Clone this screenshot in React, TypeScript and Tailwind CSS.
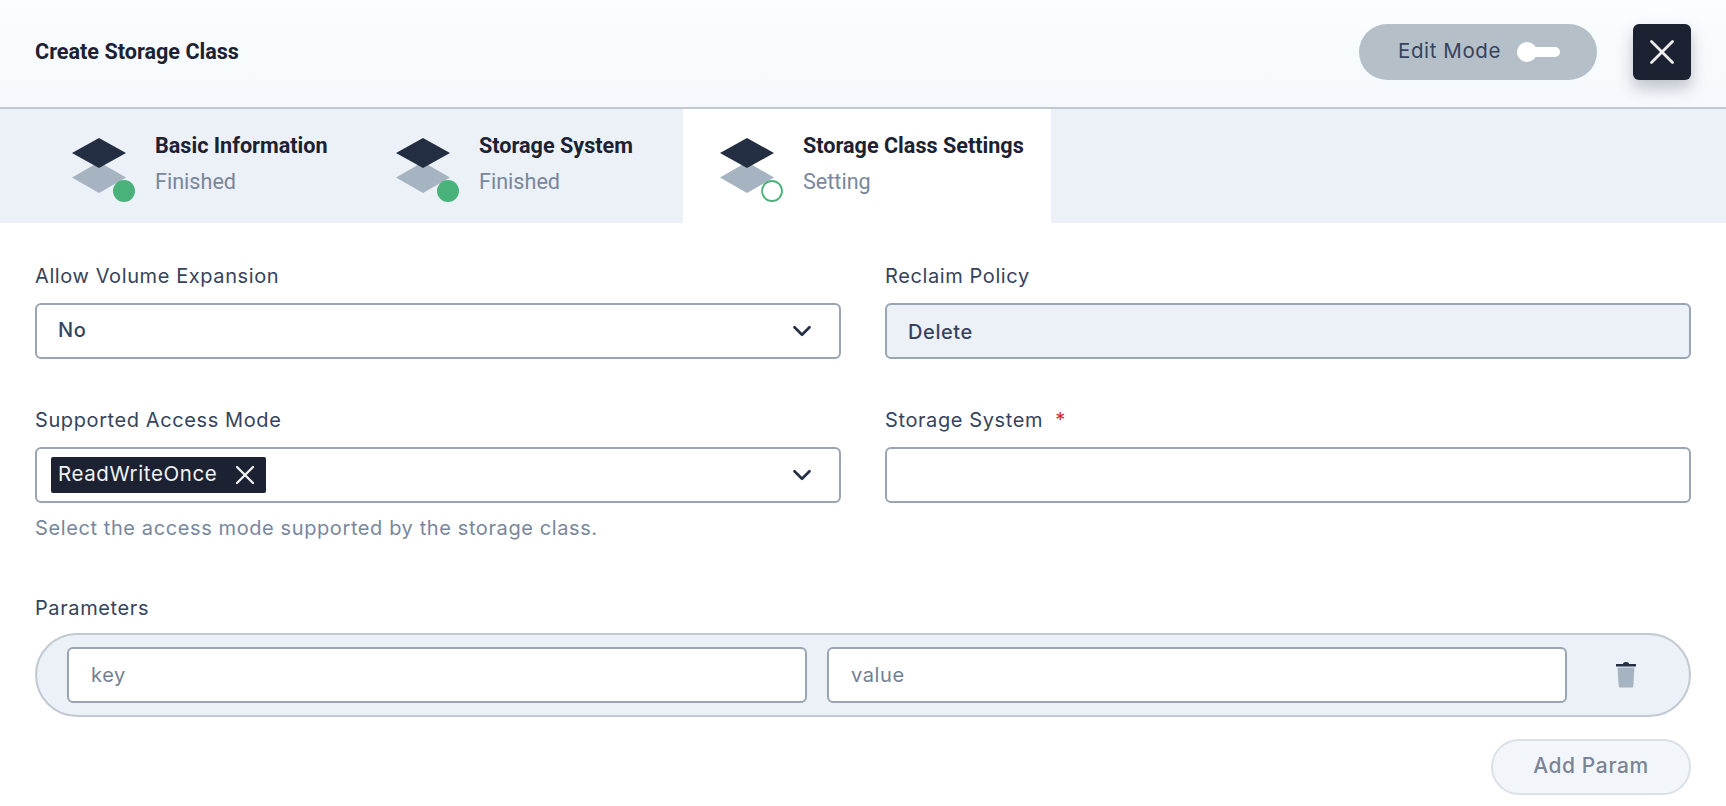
import { ChevronDown, X } from 'lucide-react';

const uiFont = "font-['Inter','Noto_Sans',sans-serif] tracking-[0.6px]";
const boldFont = "font-['Roboto',sans-serif]";

function StepIcon({ done }: { done: boolean }) {
    return (
        <svg width="66" height="68" viewBox="0 0 66 68" className="shrink-0">
            <path d="M27 27 L54 42.5 L27 58 L0 42.5 Z" fill="#a6b3c0" />
            <path d="M27 3 L54 18 L27 33 L0 18 Z" fill="#242e42" />
            {done ? (
                <circle cx="52" cy="56" r="11" fill="#48b27a" />
            ) : (
                <circle cx="52" cy="56" r="10" fill="#fff" stroke="#48b27a" strokeWidth="1.8" />
            )}
        </svg>
    );
}

function Step({ title, status, done, active, width }: { title: string; status: string; done: boolean; active?: boolean; width: string }) {
    return (
        <div className={`flex items-start gap-[17px] pl-[37px] pt-[26px] h-[114px] ${width} ${active ? 'bg-white' : ''}`}>
            <StepIcon done={done} />
            <div className={boldFont}>
                <div className="text-[21.6px] leading-[14px] pt-[4px] font-bold text-[#1c2231]">{title}</div>
                <div className="text-[21.6px] leading-[24px] mt-[17px] text-[#79879c]">{status}</div>
            </div>
        </div>
    );
}

function Label({ children }: { children: React.ReactNode }) {
    return <div className={`${uiFont} text-[20px] leading-[28px] text-[#36435c]`}>{children}</div>;
}

export default function App() {
    return (
        <div className={`w-[1726px] h-[806px] overflow-hidden bg-white ${boldFont}`}>
            <header className="h-[109px] flex items-center justify-between pl-[35px] pr-[35px] border-b-2 border-[#c1c9d1] bg-gradient-to-b from-[#fbfdff] to-[#f5f9fd]">
                <h1 className="text-[21.6px] font-bold text-[#1c2231] mt-[-3px]">Create Storage Class</h1>
                <div className="flex items-center gap-[36px] mt-[-3px]">
                    <div className="w-[238px] h-[56px] rounded-[28px] bg-[#b5bfc8] flex items-center pl-[39px]">
                        <span className={`${uiFont} text-[20.5px] text-[#36435c] mt-[-2px]`}>Edit Mode</span>
                        <div className="relative ml-[16px] w-[43px] h-[10px] rounded-full bg-white">
                            <span className="absolute left-0 top-[-5px] w-[20px] h-[20px] rounded-full bg-white" />
                        </div>
                    </div>
                    <button className="w-[58px] h-[56px] rounded-[6px] bg-[#1c2231] flex items-center justify-center text-[#eeeeee] shadow-[0_8px_16px_rgba(36,46,66,0.28)]">
                        <X size={42} strokeWidth={1.6} />
                    </button>
                </div>
            </header>

            <div className="flex h-[114px] pl-[35px] bg-[#ecf0f7]">
                <Step title="Basic Information" status="Finished" done width="w-[324px]" />
                <Step title="Storage System" status="Finished" done width="w-[324px]" />
                <Step title="Storage Class Settings" status="Setting" done={false} active width="w-[368px]" />
            </div>

            <main className="px-[35px] pt-[39px]">
                <div className="grid grid-cols-2 gap-x-[44px]">
                    <div>
                        <Label>Allow Volume Expansion</Label>
                        <div className={`${uiFont} mt-[13px] h-[56px] flex items-center justify-between pl-[21px] pr-[22px] border-2 border-[#9aa5b3] rounded-[6px] text-[20px] font-medium text-[#36435c]`}>
                            <span className="mt-[-2px]">No</span>
                            <ChevronDown size={30} strokeWidth={2.1} className="text-[#242e42]" />
                        </div>
                    </div>
                    <div>
                        <Label>Reclaim Policy</Label>
                        <div className={`${uiFont} mt-[13px] h-[56px] flex items-center pl-[21px] border-2 border-[#9aa5b3] rounded-[6px] bg-[#ecf0f7] text-[20px] font-medium text-[#36435c]`}>
                            <span className="mt-[1px]">Delete</span>
                        </div>
                    </div>
                    <div className="mt-[47px]">
                        <Label>Supported Access Mode</Label>
                        <div className={`${uiFont} mt-[13px] h-[56px] flex items-center justify-between pl-[14px] pr-[22px] border-2 border-[#9aa5b3] rounded-[6px]`}>
                            <span className="flex items-center h-[36px] pl-[7px] pr-[5px] rounded-[2px] bg-[#1c2231] text-[20.5px] text-[#f2f2f2]">
                                <span className="mt-[-2px]">ReadWriteOnce</span>
                                <X size={32} strokeWidth={1.7} className="ml-[12px]" />
                            </span>
                            <ChevronDown size={30} strokeWidth={2.1} className="text-[#242e42]" />
                        </div>
                        <div className={`${uiFont} mt-[11px] text-[20px] leading-[28px] text-[#79879c]`}>Select the access mode supported by the storage class.</div>
                    </div>
                    <div className="mt-[47px]">
                        <Label>
                            Storage System <span className="ml-[6px] text-[#d8262c]">*</span>
                        </Label>
                        <div className="mt-[13px] h-[56px] border-2 border-[#9aa5b3] rounded-[6px]" />
                    </div>
                </div>

                <div className="mt-[52px]">
                    <Label>Parameters</Label>
                    <div className="mt-[11px] h-[84px] flex items-center pl-[30px] pr-[51px] rounded-[42px] border-2 border-[#c1c9d1] bg-[#ecf0f7]">
                        <div className={`${uiFont} flex-1 h-[56px] flex items-center pl-[22px] border-2 border-[#9aa5b3] rounded-[6px] bg-white text-[20px] text-[#737f93]`}>key</div>
                        <div className={`${uiFont} ml-[20px] flex-1 h-[56px] flex items-center pl-[22px] border-2 border-[#9aa5b3] rounded-[6px] bg-white text-[20px] text-[#737f93]`}>value</div>
                        <svg width="24" height="28" viewBox="0 0 24 28" className="ml-[47px] shrink-0">
                            <path d="M9 3 Q9 1 12 1 Q15 1 15 3 Z" fill="#242e42" />
                            <rect x="2" y="3" width="20" height="2.5" fill="#242e42" />
                            <path d="M3.5 6.5 H20.5 L19.3 25 Q19.2 26.5 18 26.5 H6 Q4.8 26.5 4.7 25 Z" fill="#a6b3c0" />
                        </svg>
                    </div>
                    <div className="flex justify-end mt-[22px]">
                        <button className={`${uiFont} w-[200px] h-[56px] rounded-[28px] border-2 border-[#dbe1e8] bg-[#f2f5f9] text-[21px] font-medium text-[#7b8497]`}>
                            <span className="block mt-[-2px]">Add Param</span>
                        </button>
                    </div>
                </div>
            </main>
        </div>
    );
}
